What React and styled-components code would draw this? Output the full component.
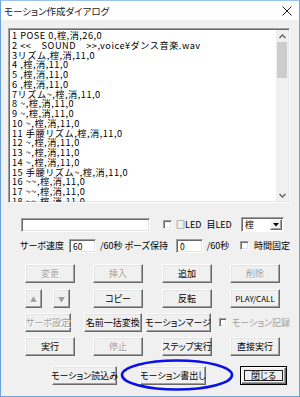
import React from 'react';
import styled, { createGlobalStyle } from 'styled-components';

const FONT = `"Noto Sans CJK JP", "Noto Sans", sans-serif`;

const Global = createGlobalStyle`
  html, body { margin: 0; padding: 0; background: #ffffff; }
  * { box-sizing: border-box; }
`;

const Window = styled.div`
  position: relative;
  width: 300px;
  height: 397px;
  border: 1px solid #6aa3dc;
  border-top-color: #9cc3ea;
  background: #f0f0f0;
  display: flex;
  flex-direction: column;
  font-family: ${FONT};
  font-size: 9px;
  color: #000;
  font-feature-settings: "palt";
`;

const TitleBar = styled.div`
  height: 19px;
  background: #ffffff;
  display: flex;
  align-items: center;
  justify-content: space-between;
  padding: 0 7px 0 3px;
  font-size: 9.5px;
  color: #1a1a1a;
`;

const Body = styled.div`
  flex: 1;
  display: flex;
  flex-direction: column;
  padding: 8px 9px 0 7px;
`;

const ListBox = styled.div`
  height: 175px;
  background: #fff;
  border: 1px solid;
  border-color: #a0a0a0 #ffffff #ffffff #a0a0a0;
  box-shadow: inset 1px 1px 0 #696969, inset -1px -1px 0 #e3e3e3;
  display: flex;
  overflow: hidden;
`;

const ListItems = styled.div`
  flex: 1;
  padding: 2px 0 0 3px;
  overflow: hidden;
  white-space: pre;
  font-feature-settings: normal;
`;

const ListLine = styled.div`
  height: 9.75px;
  line-height: 9.75px;
  font-size: 9.2px;
  letter-spacing: 0.5px;
`;

const ScrollBar = styled.div`
  width: 12px;
  margin: 1px 1px 1px 0;
  background: #f0f0f0;
  display: flex;
  flex-direction: column;
  align-items: center;
`;

const ScrollArrow = styled.div`
  height: 12px;
  width: 12px;
  display: flex;
  align-items: center;
  justify-content: center;
`;

const Thumb = styled.div`
  width: 10px;
  height: 36px;
  background: #cdcdcd;
`;

const Spacer = styled.div`
  flex: 1;
`;

const Row = styled.div`
  position: relative;
  display: flex;
  align-items: center;
  height: ${p => p.$h || 19}px;
  margin-top: ${p => p.$mt || 0}px;
  padding-left: ${p => p.$pl || 0}px;
`;

const TextBox = styled.div`
  width: ${p => p.$w}px;
  height: ${p => p.$h || 14}px;
  margin-left: ${p => p.$ml || 0}px;
  background: #fff;
  border: 1px solid;
  border-color: #a0a0a0 #ffffff #ffffff #a0a0a0;
  box-shadow: inset 1px 1px 0 #696969, inset -1px -1px 0 #e3e3e3;
  padding-left: 3px;
  font-size: 8.5px;
  line-height: 12px;
`;

const Label = styled.span`
  margin-left: ${p => p.$ml || 0}px;
  color: ${p => (p.$disabled ? '#a0a0a0' : '#000')};
  font-size: 9px;
  white-space: pre;
  letter-spacing: ${p => p.$ls || 0}px;
`;

const CheckBox = styled.div`
  width: 9px;
  height: 9px;
  margin-left: ${p => p.$ml || 0}px;
  background: #fff;
  border: 1px solid;
  border-color: #a0a0a0 #ffffff #ffffff #a0a0a0;
  box-shadow: inset 1px 1px 0 #696969, inset -1px -1px 0 #e3e3e3;
`;

const Select = styled.div`
  width: ${p => p.$w}px;
  height: 15px;
  margin-left: ${p => p.$ml || 0}px;
  background: #fff;
  border: 1px solid;
  border-color: #a0a0a0 #ffffff #ffffff #a0a0a0;
  box-shadow: inset 1px 1px 0 #696969;
  display: flex;
  align-items: center;
  padding: 1px 1px 1px 3px;
  font-size: 9px;
`;

const DropButton = styled.div`
  margin-left: auto;
  width: 12px;
  height: 11px;
  background: #f0f0f0;
  border: 1px solid;
  border-color: #ffffff #696969 #696969 #ffffff;
  box-shadow: inset -1px -1px 0 #a0a0a0;
  display: flex;
  align-items: center;
  justify-content: center;
`;

const Button = styled.div`
  position: relative;
  width: ${p => p.$w || 50}px;
  height: ${p => p.$h || 19}px;
  margin-left: ${p => p.$ml || 0}px;
  background: #f0f0f0;
  border: 1px solid;
  border-color: #ffffff #696969 #696969 #ffffff;
  box-shadow: inset -1px -1px 0 #a0a0a0, inset 1px 1px 0 #e3e3e3;
  display: flex;
  align-items: center;
  justify-content: center;
  color: ${p => (p.$disabled ? '#a0a0a0' : '#000')};
  font-size: ${p => p.$fs || 9}px;
  white-space: nowrap;
  letter-spacing: ${p => p.$ls || 0}px;
  text-shadow: ${p => (p.$disabled ? '1px 1px 0 #ffffff' : 'none')};
`;

const DefaultButton = styled(Button)`
  border: 1px solid #000;
  box-shadow: inset 1px 1px 0 #ffffff, inset -1px -1px 0 #696969, inset -2px -2px 0 #a0a0a0;
  &::after {
    content: '';
    position: absolute;
    left: 3px;
    top: 3px;
    right: 3px;
    bottom: 3px;
    border: 1px solid #202020;
  }
`;

const Ellipse = styled.svg`
  position: absolute;
  left: ${p => p.$x}px;
  top: ${p => p.$y}px;
  pointer-events: none;
`;

const Chevron = ({ up }) => (
  <svg width="7" height="5" viewBox="0 0 7 5">
    <path
      d={up ? 'M0.5 4 L3.5 1 L6.5 4' : 'M0.5 1 L3.5 4 L6.5 1'}
      fill="none"
      stroke="#606060"
      strokeWidth="1.3"
    />
  </svg>
);

const lines = [
  '1 POSE 0,榁,消,26,0',
  '2 <<    SOUND    >>,voice¥ダンス音楽.wav',
  '3リズム,榁,消,11,0',
  '4 ,榁,消,11,0',
  '5 ,榁,消,11,0',
  '6 ,榁,消,11,0',
  '7リズム~,榁,消,11,0',
  '8 ~,榁,消,11,0',
  '9 ~,榁,消,11,0',
  '10 ~,榁,消,11,0',
  '11 手腰リズム,榁,消,11,0',
  '12 ~,榁,消,11,0',
  '13 ~,榁,消,11,0',
  '14 ~,榁,消,11,0',
  '15 手腰リズム~,榁,消,11,0',
  '16 ~~,榁,消,11,0',
  '17 ~~,榁,消,11,0',
  '18 ~~,榁,消,11,0',
];

export default function App() {
  return (
    <>
      <Global />
      <Window>
        <TitleBar>
          <span>モーション作成ダイアログ</span>
          <svg width="10" height="10" viewBox="0 0 10 10">
            <path d="M0.5 0.5 L9.5 9.5 M9.5 0.5 L0.5 9.5" stroke="#222" strokeWidth="1" />
          </svg>
        </TitleBar>
        <Body>
          <ListBox>
            <ListItems>
              {lines.map((l, i) => (
                <ListLine key={i}>{l}</ListLine>
              ))}
            </ListItems>
            <ScrollBar>
              <ScrollArrow>
                <Chevron up />
              </ScrollArrow>
              <Thumb />
              <Spacer />
              <ScrollArrow>
                <Chevron />
              </ScrollArrow>
            </ScrollBar>
          </ListBox>

          <Row $mt={14} $h={15} $pl={13}>
            <TextBox $w={129} $h={14} />
            <CheckBox $ml={13} />
            <Label $ml={4}>□LED</Label>
            <Label $ml={5}>目LED</Label>
            <Select $w={43} $ml={9}>
              榁
              <DropButton>
                <svg width="6" height="4" viewBox="0 0 6 4">
                  <path d="M0 0 L6 0 L3 3.5 Z" fill="#000" />
                </svg>
              </DropButton>
            </Select>
          </Row>

          <Row $mt={6} $h={15} $pl={12}>
            <Label>サーボ速度</Label>
            <TextBox $w={28} $ml={5}>60</TextBox>
            <Label $ml={4}>/60秒 ポーズ保持</Label>
            <TextBox $w={28} $ml={8}>0</TextBox>
            <Label $ml={4}>/60秒</Label>
            <CheckBox $ml={11} />
            <Label $ml={5}>時間固定</Label>
          </Row>

          <Row $mt={11} $pl={17}>
            <Button $disabled>変更</Button>
            <Button $ml={18} $disabled>挿入</Button>
            <Button $ml={19}>追加</Button>
            <Button $ml={18} $disabled>削除</Button>
          </Row>

          <Row $mt={6} $pl={17}>
            <Button $w={17} $disabled $fs={7}>▲</Button>
            <Button $w={17} $ml={11} $disabled $fs={7}>▼</Button>
            <Button $ml={23}>コピー</Button>
            <Button $ml={19}>反転</Button>
            <Button $ml={18} $fs={8}>PLAY/CALL</Button>
          </Row>

          <Row $mt={5} $pl={17}>
            <Button $disabled>サーボ設定</Button>
            <Button $w={65} $ml={13}>名前一括変換</Button>
            <Button $w={65} $ml={4}>モーションマージ</Button>
            <CheckBox $ml={8} />
            <Label $ml={5} $disabled>モーション記録</Label>
          </Row>

          <Row $mt={5} $pl={17}>
            <Button>実行</Button>
            <Button $ml={18} $disabled>停止</Button>
            <Button $ml={19}>ステップ実行</Button>
            <Button $ml={18}>直接実行</Button>
          </Row>

          <Row $mt={10} $pl={44}>
            <Button $w={65}>モーション読込み</Button>
            <Button $w={66} $ml={23}>モーション書出し</Button>
            <DefaultButton $w={47} $ml={34}>閉じる</DefaultButton>
            <Ellipse $x={112} $y={-7} width="114" height="32" viewBox="0 0 114 32">
              <ellipse cx="57" cy="16" rx="55" ry="14.5" fill="none" stroke="#0a10e6" strokeWidth="2.6" />
            </Ellipse>
          </Row>
        </Body>
      </Window>
    </>
  );
}
